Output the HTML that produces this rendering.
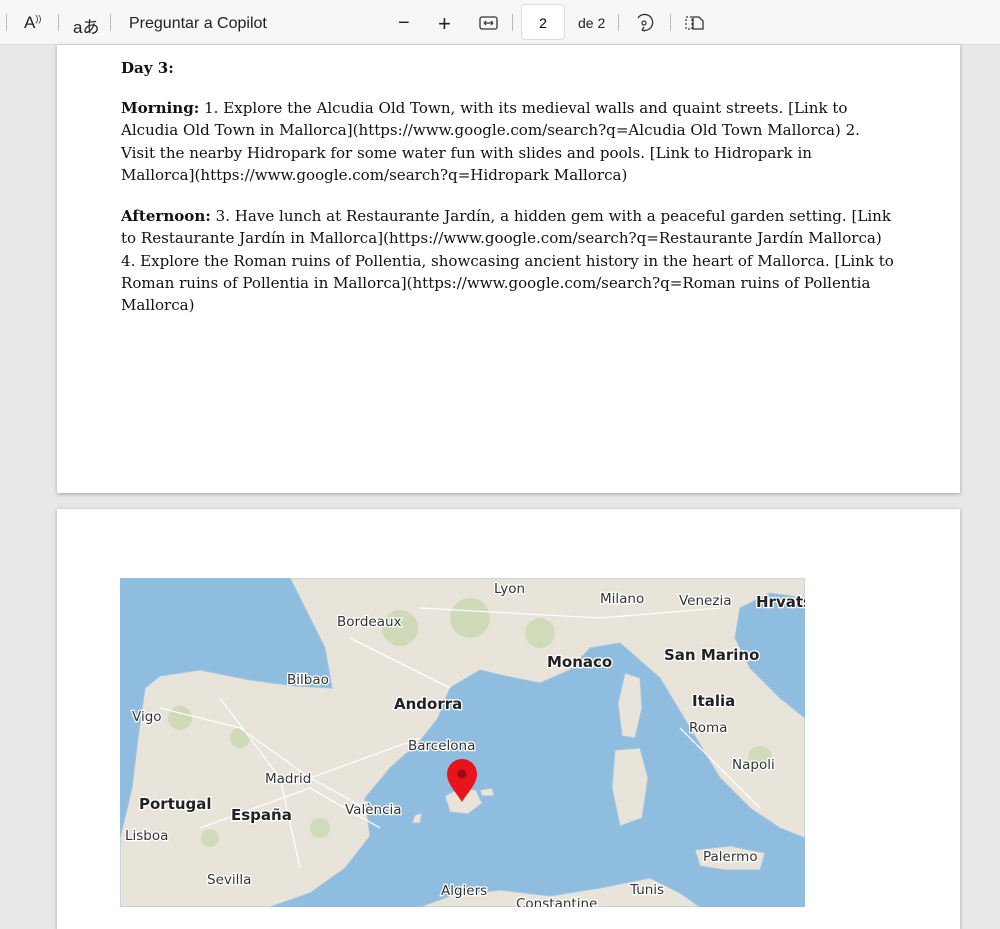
<!DOCTYPE html>
<html><head><meta charset="utf-8"><style>
body{margin:0;width:1000px;height:907px;overflow:hidden;background:#e8e8e8;position:relative;font-family:"Liberation Sans",sans-serif}
.tb{position:absolute;left:0;top:0;width:1000px;height:45px;background:#f7f7f7;border-bottom:1px solid #dcdcdc;box-sizing:border-box}
.tb span{position:absolute;color:#222;font-size:16px}
.sep{position:absolute;top:14px;width:1px;height:17px;background:#bbb}
.page{position:absolute;left:57px;width:903px;background:#fff;box-shadow:0 1px 4px rgba(0,0,0,.3)}
.txt{position:absolute;left:121px;font-family:"DejaVu Serif",serif;font-size:15.05px;line-height:22.3px;color:#111;white-space:nowrap}
.m text{font-family:"DejaVu Sans",sans-serif;font-size:13.5px;fill:#333;stroke:#fff;stroke-width:2.5px;paint-order:stroke}
.m text.b{font-weight:bold;font-size:15px;fill:#222}
</style></head><body>
<div class="tb">
<div class="sep" style="left:6px"></div>
<span style="left:24px;top:13px;font-size:17px">A<sup style="font-size:9px">))</sup></span>
<div class="sep" style="left:58px"></div>
<span style="left:73px;top:13px;font-size:17px">aあ</span>
<div class="sep" style="left:110px"></div>
<span style="left:129px;top:15px">Preguntar a Copilot</span>
<span style="left:398px;top:12px;font-size:20px">−</span>
<span style="left:438px;top:11px;font-size:22px">+</span>
<svg style="position:absolute;left:479px;top:15px" width="20" height="16"><rect x="1" y="2" width="17" height="12" rx="2" fill="none" stroke="#333" stroke-width="1.3"/><path d="M5 8h9M5 8l2-2M5 8l2 2M14 8l-2-2M14 8l-2 2" stroke="#333" stroke-width="1.2" fill="none"/></svg>
<div class="sep" style="left:512px"></div>
<div style="position:absolute;left:521px;top:4px;width:44px;height:36px;background:#fff;border:1px solid #ddd;border-radius:4px;box-sizing:border-box;text-align:center;line-height:36px;font-size:14px">2</div>
<span style="left:578px;top:15px;font-size:14px">de 2</span>
<div class="sep" style="left:618px"></div>
<svg style="position:absolute;left:633px;top:12px" width="22" height="22"><path d="M5 6a8 8 0 1 1 4 12" fill="none" stroke="#333" stroke-width="1.3"/><path d="M9 18l2-3M9 18l3 1" stroke="#333" stroke-width="1.3"/><circle cx="11" cy="11" r="2" fill="none" stroke="#333" stroke-width="1.2"/></svg>
<div class="sep" style="left:670px"></div>
<svg style="position:absolute;left:684px;top:14px" width="22" height="18"><path d="M2 3h6v12H2z" fill="none" stroke="#333" stroke-width="1.2" stroke-dasharray="2 2"/><path d="M9 3h6l4 4v8H9z" fill="none" stroke="#333" stroke-width="1.3"/></svg>
</div>

<div class="page" style="top:45px;height:448px"></div>
<div class="page" style="top:509px;height:420px"></div>

<div class="txt" style="top:57px"><b>Day 3:</b></div>
<div class="txt" style="top:97px"><b>Morning:</b> 1. Explore the Alcudia Old Town, with its medieval walls and quaint streets. [Link to<br>Alcudia Old Town in Mallorca](https://www.google.com/search?q=Alcudia Old Town Mallorca) 2.<br>Visit the nearby Hidropark for some water fun with slides and pools. [Link to Hidropark in<br>Mallorca](https://www.google.com/search?q=Hidropark Mallorca)</div>
<div class="txt" style="top:205px"><b>Afternoon:</b> 3. Have lunch at Restaurante Jardín, a hidden gem with a peaceful garden setting. [Link<br>to Restaurante Jardín in Mallorca](https://www.google.com/search?q=Restaurante Jardín Mallorca)<br>4. Explore the Roman ruins of Pollentia, showcasing ancient history in the heart of Mallorca. [Link to<br>Roman ruins of Pollentia in Mallorca](https://www.google.com/search?q=Roman ruins of Pollentia<br>Mallorca)</div>

<svg class="m" style="position:absolute;left:120px;top:578px" width="685" height="329">
<rect width="685" height="329" fill="#8fbde0"/>
<g fill="#e9e4da" stroke="#a3c3dd" stroke-width="1">
<path d="M170 0L685 0L685 20L650 15L620 30L615 60L630 90L660 120L685 140L685 260L660 250L630 230L600 200L570 150L540 100L500 65L470 70L450 92L420 105L385 98L360 92L330 110L318 140L300 163L270 190L245 220L250 258L225 290L190 315L150 329L0 329L0 260L12 210L18 160L25 110L40 98L80 92L130 102L175 108L212 110L205 70L185 30Z"/>
<path d="M300 329L330 318L380 312L430 318L480 310L530 300L560 315L580 329Z"/>
<path d="M575 272L610 268L645 275L640 292L605 292L580 288Z"/>
<path d="M505 95L520 100L522 130L515 160L502 158L498 125Z"/>
<path d="M495 172L520 170L528 200L522 240L500 248L492 210Z"/>
<path d="M325 218L340 210L356 212L362 225L348 236L330 234Z"/>
<path d="M360 212L372 210L374 218L362 218Z"/>
<path d="M295 237L302 235L300 245L292 245Z"/>
</g>
<g fill="#c9d8b0" opacity=".8"><circle cx="60" cy="140" r="12"/><circle cx="120" cy="160" r="10"/><circle cx="280" cy="50" r="18"/><circle cx="350" cy="40" r="20"/><circle cx="420" cy="55" r="15"/><circle cx="200" cy="250" r="10"/><circle cx="640" cy="180" r="12"/><circle cx="90" cy="260" r="9"/></g>
<g stroke="#fff" stroke-width="1.3" fill="none" opacity=".9"><path d="M40 130L120 150L190 200L245 230M100 120L160 200L180 290M190 200L300 160M230 60L330 110M300 30L480 40L600 30M560 150L640 230M80 250L190 210L260 250"/></g>
<text x="374" y="15">Lyon</text><text x="480" y="25">Milano</text><text x="559" y="27">Venezia</text><text class="b" x="636" y="29">Hrvats</text>
<text x="217" y="48">Bordeaux</text><text class="b" x="427" y="89">Monaco</text><text class="b" x="544" y="82">San Marino</text>
<text x="167" y="106">Bilbao</text><text class="b" x="274" y="131">Andorra</text><text class="b" x="572" y="128">Italia</text>
<text x="12" y="143">Vigo</text><text x="569" y="154">Roma</text><text x="288" y="172">Barcelona</text><text x="612" y="191">Napoli</text>
<text x="145" y="205">Madrid</text><text class="b" x="19" y="231">Portugal</text><text class="b" x="111" y="242">España</text><text x="225" y="236">València</text>
<text x="5" y="262">Lisboa</text><text x="583" y="283">Palermo</text><text x="87" y="306">Sevilla</text><text x="321" y="317">Algiers</text><text x="510" y="316">Tunis</text><text x="396" y="330">Constantine</text>
<path d="M342 224C336 214 327 206 327 196A15 15 0 0 1 357 196C357 206 348 214 342 224Z" fill="#e8141c"/><circle cx="342" cy="196" r="4.5" fill="#9e0b10"/>
</svg>
</body></html>
